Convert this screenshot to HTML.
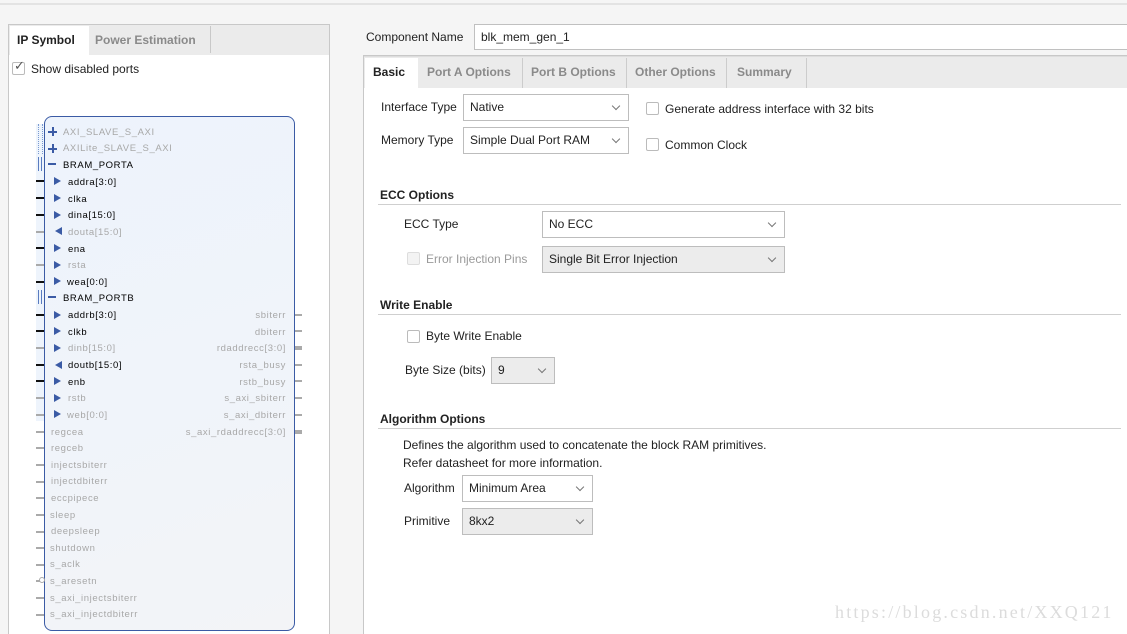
<!DOCTYPE html>
<html style="width:1127px;height:634px;overflow:hidden"><head><meta charset="utf-8"><style>
*{margin:0;padding:0;box-sizing:border-box}
body{width:1127px;height:634px;overflow:hidden;background:#f5f5f5;font-family:"Liberation Sans",Arial,sans-serif;font-size:12px;color:#222;position:relative}
.a{position:absolute}
.sym{font-size:9.5px;letter-spacing:0.6px;white-space:nowrap;line-height:12px;margin-top:2px}
.g{color:#a8a8a8}
.k{color:#000}
.pl{position:absolute;left:36px;width:8px;height:2px}
.pr{position:absolute;left:295px;width:7px;height:2px;background:#aaa}
.tri{position:absolute;left:54px;width:0;height:0;border-top:4px solid transparent;border-bottom:4px solid transparent;border-left:7px solid #3b5ba5}
.tril{position:absolute;left:55px;width:0;height:0;border-top:4px solid transparent;border-bottom:4px solid transparent;border-right:7px solid #3b5ba5}
.plus{position:absolute;left:48px;width:9px;height:9px}
.plus:before{content:"";position:absolute;left:0;top:3.5px;width:9px;height:2px;background:#3b5ba5}
.plus:after{content:"";position:absolute;left:3.5px;top:0;width:2px;height:9px;background:#3b5ba5}
.sel{position:absolute;border:1px solid #bdbdbd;background:#fff;padding-left:6px;line-height:24px;font-size:12px}
.sel.d{background:#ececec}
.sel:after{content:"";position:absolute;right:9px;top:8px;width:5px;height:5px;border-right:1.5px solid #777;border-bottom:1.5px solid #777;transform:rotate(45deg)}
.cb{position:absolute;width:13px;height:13px;border:1px solid #bbb;border-radius:2px;background:#fff}
.hd{position:absolute;left:380px;font-weight:bold;font-size:12px}
.hr{position:absolute;left:378px;right:6px;height:1px;background:#cfcfcf}
.tab{position:absolute;top:58px;height:30px;line-height:28px;font-weight:bold;color:#8a8a8a;padding-left:8px;border-right:1px solid #ccc}
</style></head><body>
<div class="a" style="left:0;top:3px;width:1127px;height:2px;background:#e3e3e3"></div>
<!-- left panel -->
<div class="a" style="left:8px;top:24px;width:322px;height:612px;border:1px solid #c8c8c8;border-bottom:none;background:#fff"></div>
<div class="a" style="left:9px;top:25px;width:320px;height:30px;background:#ebebeb"></div>
<div class="a" style="left:10px;top:26px;width:79px;height:30px;background:#fff;font-weight:bold;line-height:28px;padding-left:7px;color:#222">IP Symbol</div>
<div class="a" style="left:89px;top:26px;width:122px;height:27px;border-right:1px solid #c8c8c8;font-weight:bold;line-height:28px;padding-left:6px;color:#8a8a8a">Power Estimation</div>
<div class="cb" style="left:12px;top:62px;width:13px;height:13px"></div>
<div class="a" style="left:14px;top:58px;font-size:13px;color:#555">✓</div>
<div class="a" style="left:31px;top:62px;font-size:12px">Show disabled ports</div>
<!-- symbol box -->
<div class="a" style="left:36px;top:124px;width:9px;height:297px;background:#eef4fc"></div>
<div class="a" style="left:44px;top:116px;width:251px;height:515px;border:1.5px solid #3b5ba5;border-radius:8px;background:linear-gradient(160deg,#edf3fc,#f1f4f9 70%,#f3f4f7)"></div>
<div class="a" style="left:38px;top:124px;width:5px;height:30px;border-left:1px dotted #7a9ad0;border-right:1px dotted #7a9ad0"></div>
<div class="a" style="left:38px;top:157px;width:4px;height:14px;border-left:1px solid #5a7cc0;border-right:1px solid #5a7cc0"></div>
<div class="a" style="left:38px;top:290px;width:4px;height:14px;border-left:1px solid #5a7cc0;border-right:1px solid #5a7cc0"></div>
<div class="plus" style="top:127px"></div>
<div class="plus" style="top:144px"></div>
<div class="a" style="left:48px;top:163px;width:8px;height:2px;background:#3b5ba5"></div>
<div class="a" style="left:48px;top:296px;width:8px;height:2px;background:#3b5ba5"></div>
<div class="a sym g" style="left:63px;top:125px">AXI_SLAVE_S_AXI</div>
<div class="a sym g" style="left:63px;top:141px">AXILite_SLAVE_S_AXI</div>
<div class="a sym k" style="left:63px;top:158px">BRAM_PORTA</div>
<div class="a sym k" style="left:63px;top:291px">BRAM_PORTB</div>

<!-- port A -->
<div class="pl" style="top:180px;background:#111"></div><div class="tri" style="top:177px"></div><div class="a sym k" style="left:68px;top:175px">addra[3:0]</div>
<div class="pl" style="top:197px;background:#111"></div><div class="tri" style="top:194px"></div><div class="a sym k" style="left:68px;top:192px">clka</div>
<div class="pl" style="top:214px;background:#111"></div><div class="tri" style="top:211px"></div><div class="a sym k" style="left:68px;top:208px">dina[15:0]</div>
<div class="pl" style="top:231px;background:#aaa"></div><div class="tril" style="top:227px"></div><div class="a sym g" style="left:68px;top:225px">douta[15:0]</div>
<div class="pl" style="top:247px;background:#111"></div><div class="tri" style="top:244px"></div><div class="a sym k" style="left:68px;top:242px">ena</div>
<div class="pl" style="top:264px;background:#aaa"></div><div class="tri" style="top:261px"></div><div class="a sym g" style="left:68px;top:258px">rsta</div>
<div class="pl" style="top:281px;background:#111"></div><div class="tri" style="top:277px"></div><div class="a sym k" style="left:67px;top:275px">wea[0:0]</div>
<!-- port B -->
<div class="pl" style="top:314px;background:#111"></div><div class="tri" style="top:311px"></div><div class="a sym k" style="left:68px;top:308px">addrb[3:0]</div>
<div class="pl" style="top:330px;background:#111"></div><div class="tri" style="top:327px"></div><div class="a sym k" style="left:68px;top:325px">clkb</div>
<div class="pl" style="top:347px;background:#aaa"></div><div class="tri" style="top:344px"></div><div class="a sym g" style="left:68px;top:341px">dinb[15:0]</div>
<div class="pl" style="top:364px;background:#111"></div><div class="tril" style="top:361px"></div><div class="a sym k" style="left:68px;top:358px">doutb[15:0]</div>
<div class="pl" style="top:380px;background:#111"></div><div class="tri" style="top:377px"></div><div class="a sym k" style="left:68px;top:375px">enb</div>
<div class="pl" style="top:397px;background:#aaa"></div><div class="tri" style="top:394px"></div><div class="a sym g" style="left:68px;top:391px">rstb</div>
<div class="pl" style="top:414px;background:#aaa"></div><div class="tri" style="top:410px"></div><div class="a sym g" style="left:67px;top:408px">web[0:0]</div>
<!-- misc left -->
<div class="pl" style="top:431px;background:#aaa"></div><div class="a sym g" style="left:51px;top:425px">regcea</div>
<div class="pl" style="top:447px;background:#aaa"></div><div class="a sym g" style="left:51px;top:441px">regceb</div>
<div class="pl" style="top:464px;background:#aaa"></div><div class="a sym g" style="left:51px;top:458px">injectsbiterr</div>
<div class="pl" style="top:481px;background:#aaa"></div><div class="a sym g" style="left:51px;top:474px">injectdbiterr</div>
<div class="pl" style="top:497px;background:#aaa"></div><div class="a sym g" style="left:51px;top:491px">eccpipece</div>
<div class="pl" style="top:514px;background:#aaa"></div><div class="a sym g" style="left:50px;top:508px">sleep</div>
<div class="pl" style="top:531px;background:#aaa"></div><div class="a sym g" style="left:51px;top:524px">deepsleep</div>
<div class="pl" style="top:547px;background:#aaa"></div><div class="a sym g" style="left:50px;top:541px">shutdown</div>
<div class="pl" style="top:564px;background:#aaa"></div><div class="a sym g" style="left:50px;top:557px">s_aclk</div>
<div class="pl" style="top:580px;background:#aaa;width:4px"></div><div class="a" style="left:39px;top:577px;width:6px;height:6px;border:1.5px solid #aaa;border-radius:50%"></div><div class="a sym g" style="left:50px;top:574px">s_aresetn</div>
<div class="pl" style="top:597px;background:#aaa"></div><div class="a sym g" style="left:50px;top:591px">s_axi_injectsbiterr</div>
<div class="pl" style="top:614px;background:#aaa"></div><div class="a sym g" style="left:50px;top:607px">s_axi_injectdbiterr</div>
<!-- right pins -->
<div class="a sym g" style="right:841px;top:308px">sbiterr</div><div class="pr" style="top:314px"></div>
<div class="a sym g" style="right:841px;top:325px">dbiterr</div><div class="pr" style="top:330px"></div>
<div class="a sym g" style="right:841px;top:341px">rdaddrecc[3:0]</div><div class="pr" style="top:346px;height:4px"></div>
<div class="a sym g" style="right:841px;top:358px">rsta_busy</div><div class="pr" style="top:364px"></div>
<div class="a sym g" style="right:841px;top:375px">rstb_busy</div><div class="pr" style="top:380px"></div>
<div class="a sym g" style="right:841px;top:391px">s_axi_sbiterr</div><div class="pr" style="top:397px"></div>
<div class="a sym g" style="right:841px;top:408px">s_axi_dbiterr</div><div class="pr" style="top:414px"></div>
<div class="a sym g" style="right:841px;top:425px">s_axi_rdaddrecc[3:0]</div><div class="pr" style="top:430px;height:4px"></div>

<!-- right side -->
<div class="a" style="left:366px;top:30px">Component Name</div>
<div class="a" style="left:474px;top:24px;width:653px;height:26px;border:1px solid #c0c0c0;border-right:none;background:#fff;padding-left:6px;line-height:24px">blk_mem_gen_1</div>
<div class="a" style="left:363px;top:55px;width:764px;height:579px;border:1px solid #c8c8c8;border-right:none;border-bottom:none;background:#fff"></div>
<div class="a" style="left:364px;top:56px;width:763px;height:32px;background:#ebebeb;border-top:1px solid #ddd"></div>
<div class="a" style="left:365px;top:58px;width:53px;height:31px;background:#fff;font-weight:bold;line-height:28px;padding-left:8px">Basic</div>
<div class="tab" style="left:419px;width:104px">Port A Options</div>
<div class="tab" style="left:523px;width:104px">Port B Options</div>
<div class="tab" style="left:627px;width:100px">Other Options</div>
<div class="tab" style="left:729px;width:78px">Summary</div>

<div class="a" style="left:381px;top:100px">Interface Type</div>
<div class="sel" style="left:463px;top:94px;width:166px;height:27px">Native</div>
<div class="cb" style="left:646px;top:102px"></div><div class="a" style="left:665px;top:102px">Generate address interface with 32 bits</div>
<div class="a" style="left:381px;top:133px">Memory Type</div>
<div class="sel" style="left:463px;top:127px;width:166px;height:27px">Simple Dual Port RAM</div>
<div class="cb" style="left:646px;top:138px"></div><div class="a" style="left:665px;top:138px">Common Clock</div>

<div class="hd" style="top:188px">ECC Options</div><div class="hr" style="top:204px"></div>
<div class="a" style="left:404px;top:217px">ECC Type</div>
<div class="sel" style="left:542px;top:211px;width:243px;height:27px">No ECC</div>
<div class="cb" style="left:407px;top:252px;background:#f3f3f3;border-color:#ddd"></div><div class="a" style="left:426px;top:252px;color:#9a9a9a">Error Injection Pins</div>
<div class="sel d" style="left:542px;top:246px;width:243px;height:27px">Single Bit Error Injection</div>

<div class="hd" style="top:298px">Write Enable</div><div class="hr" style="top:314px"></div>
<div class="cb" style="left:407px;top:330px"></div><div class="a" style="left:426px;top:329px">Byte Write Enable</div>
<div class="a" style="left:405px;top:363px">Byte Size (bits)</div>
<div class="sel d" style="left:491px;top:357px;width:64px;height:27px">9</div>

<div class="hd" style="top:412px">Algorithm Options</div><div class="hr" style="top:428px"></div>
<div class="a" style="left:403px;top:438px">Defines the algorithm used to concatenate the block RAM primitives.</div>
<div class="a" style="left:403px;top:456px">Refer datasheet for more information.</div>
<div class="a" style="left:404px;top:481px">Algorithm</div>
<div class="sel" style="left:462px;top:475px;width:131px;height:27px">Minimum Area</div>
<div class="a" style="left:404px;top:514px">Primitive</div>
<div class="sel d" style="left:462px;top:508px;width:131px;height:27px">8kx2</div>

<div class="a" style="left:835px;top:602px;font-family:'Liberation Serif',serif;font-size:18px;color:#dcdcdc;letter-spacing:2.2px;white-space:nowrap">https://blog.csdn.net/XXQ121</div>
</body></html>
